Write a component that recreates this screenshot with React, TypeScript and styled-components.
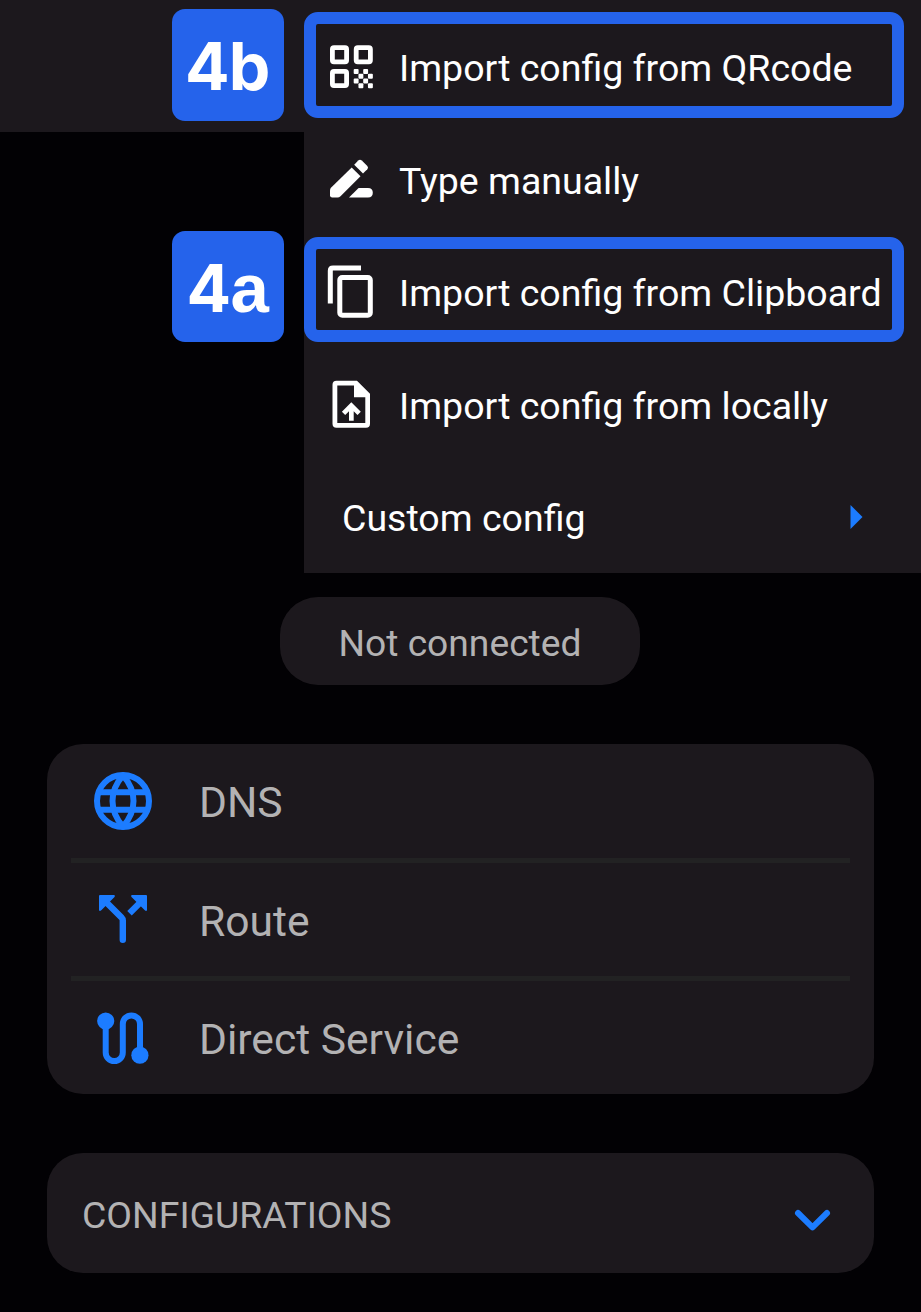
import React from "react";
import styled, { createGlobalStyle } from "styled-components";

const Global = createGlobalStyle`
  * { box-sizing: border-box; }
  html, body { margin: 0; background: #020104; }
  body { font-family: Roboto, "Liberation Sans", sans-serif; color: #fff; }
  svg { display: block; overflow: visible; }
`;

const Screen = styled.div`
  position: relative;
  width: 921px;
  height: 1312px;
  overflow: hidden;
  display: flex;
  flex-direction: column;
  align-items: center;
  background: #020104;
`;

const TopBar = styled.header`
  width: 100%;
  height: 132px;
  flex: none;
  background: #1c181d;
`;

const StatusPill = styled.div`
  flex: none;
  width: 360px;
  height: 88px;
  margin-top: 465px;
  margin-right: 1px;
  border-radius: 38px;
  background: #1c181d;
  color: #b3b2b3;
  display: flex;
  align-items: center;
  justify-content: center;
  padding-top: 4px;
  font-size: 37.2px;
  white-space: nowrap;
`;

const Card = styled.section<{ $top: number; $height: number }>`
  flex: none;
  width: 827px;
  height: ${(p) => p.$height}px;
  margin-top: ${(p) => p.$top}px;
  border-radius: 36px;
  background: #1c181d;
  color: #b3b2b3;
`;

const SettingRow = styled.div`
  display: flex;
  align-items: center;
  height: 113.5px;
  padding-left: 46px;
  font-size: 42.6px;
`;

const SettingIcon = styled.span`
  width: 60px;
  height: 60px;
  margin-right: 46px;
  flex: none;
`;

const SettingLabel = styled.span`
  padding-top: 3px;
  white-space: nowrap;
`;

const Divider = styled.div`
  height: 5px;
  margin: 0 24px 0 24px;
  background: #222223;
`;

const ConfigHeader = styled.div`
  height: 100%;
  display: flex;
  align-items: center;
  justify-content: space-between;
  padding: 3px 43px 0 35px;
  font-size: 37.4px;
`;

const ChevronIcon = styled.svg`
  margin-top: 11px;
`;

const Menu = styled.nav`
  position: absolute;
  top: 0;
  right: 0;
  width: 617px;
  height: 573px;
  padding-top: 10.5px;
  background: #1c181d;
`;

const MenuItem = styled.div<{ $sub?: boolean }>`
  display: flex;
  align-items: center;
  height: 112.5px;
  padding-left: ${(p) => (p.$sub ? 38 : 17)}px;
  padding-right: 58px;
  justify-content: ${(p) => (p.$sub ? "space-between" : "flex-start")};
  font-size: 37.5px;
  white-space: nowrap;
`;

const MenuIcon = styled.span`
  width: 60px;
  height: 60px;
  margin-right: 18px;
  flex: none;
`;

const MenuLabel = styled.span`
  padding-top: 2.5px;
`;

const Highlight = styled.div<{ $top: number }>`
  position: absolute;
  left: 304px;
  top: ${(p) => p.$top}px;
  width: 600px;
  height: 105.5px;
  border: 12px solid #2563eb;
  border-radius: 14px;
`;

const Badge = styled.div<{ $top: number }>`
  position: absolute;
  left: 171.5px;
  top: ${(p) => p.$top}px;
  width: 112.5px;
  height: 111.5px;
  border-radius: 13px;
  background: #2563eb;
  display: flex;
  align-items: baseline;
  justify-content: center;
  padding-right: 1px;
  font: 700 66px/115px Inter, sans-serif;
  letter-spacing: -0.8px;
`;

const TailedLetter = styled.span`
  font: 700 69px/100px "Liberation Sans", Arial, sans-serif;
`;

const QrIcon = () => (
  <svg width="60" height="60" viewBox="0 0 60 60" fill="#fff">
    <g fillRule="evenodd">
      <path d="M13 8.3H24Q28 8.3 28 12.3V23.3Q28 27.3 24 27.3H13Q9 27.3 9 23.3V12.3Q9 8.3 13 8.3ZM13.8 13.1V22.5H23.2V13.1Z" />
      <path d="M36.8 8.3H47.8Q51.8 8.3 51.8 12.3V23.3Q51.8 27.3 47.8 27.3H36.8Q32.8 27.3 32.8 23.3V12.3Q32.8 8.3 36.8 8.3ZM37.6 13.1V22.5H47V13.1Z" />
      <path d="M13 32H24Q28 32 28 36V47Q28 51 24 51H13Q9 51 9 47V36Q9 32 13 32ZM13.8 36.8V46.2H23.2V36.8Z" />
    </g>
    {[0, 1, 2, 3].flatMap((r) =>
      [0, 2].map((c) => (
        <rect
          key={`${r}-${c}`}
          x={32.7 + (c + (r % 2)) * 4.75}
          y={32 + r * 4.75}
          width="4.9"
          height="4.9"
          rx="1"
        />
      )),
    )}
  </svg>
);

const PencilIcon = () => (
  <svg width="60" height="60" viewBox="0 -1.2 60 60" fill="#fff">
    <path d="M30.7 17.2L39.5 26L19.5 46Q18.2 47.3 16.5 47.3H11.2Q9 47.3 9 45.1V40Q9 38.4 10.2 37.2Z" />
    <path d="M33.2 14.5L37.2 10.3Q39 8.7 40.8 10.3L46.3 15.8Q47.8 17.5 46.3 19.1L42 23.3Z" />
    <path d="M28 47.3L37.6 37.8H47Q51.8 38 51.8 42.5T47 47.3Z" />
  </svg>
);

const CopyIcon = () => (
  <svg width="60" height="60" viewBox="0 -1.2 60 60" fill="none" stroke="#fff" strokeWidth="5">
    <path d="M9.3 40.3V7.5Q9.3 4.8 12 4.8H40" />
    <rect x="18.8" y="14.4" width="30.5" height="37.6" rx="2.5" />
  </svg>
);

const FileUploadIcon = () => (
  <svg width="60" height="60" viewBox="0 0.3 60 60">
    <path
      fill="#fff"
      fillRule="evenodd"
      d="M15.5 7H36L49 20V50Q49 54 45 54H15.5Q11.5 54 11.5 50V11Q11.5 7 15.5 7ZM16.3 11.7V49.3H44.3V23.5H33V11.7Z"
    />
    <path fill="#fff" d="M30.3 28.5L39.8 38L36.5 41.3L32.7 37.5V47H28V37.5L24.2 41.3L20.9 38Z" />
  </svg>
);

const GlobeIcon = () => (
  <svg width="60" height="60" viewBox="0 0 60 60" fill="none" stroke="#1c7cff" strokeWidth="6">
    <circle cx="30" cy="30" r="26" />
    <path d="M5 21.2H55M5 38.8H55" />
    <path strokeLinejoin="round" d="M30 4.5C16 20 16 40 30 55.5C44 40 44 20 30 4.5Z" />
  </svg>
);

const SplitIcon = () => (
  <svg width="60" height="60" viewBox="0 0 60 60">
    <path
      fill="none"
      stroke="#1c7cff"
      strokeWidth="6.4"
      strokeLinecap="round"
      d="M12 12L28.5 28.5Q29.8 29.8 29.8 31.5V50.8"
    />
    <path stroke="#1c7cff" strokeWidth="6.4" d="M36.5 24.3L47 13.8" />
    <path
      fill="#1c7cff"
      d="M7 6H21Q22.8 6.5 21.5 8L8.3 21.3Q6.5 22.8 6 21V7Q6 6 7 6ZM53 6H39Q37.2 6.5 38.5 8L51.8 21.3Q53.5 22.8 54 21V7Q54 6 53 6Z"
    />
  </svg>
);

const CableIcon = () => (
  <svg width="60" height="60" viewBox="0 0 60 60">
    <path
      fill="none"
      stroke="#1c7cff"
      strokeWidth="6"
      d="M12.7 14V44.5A8.5 8.5 0 0 0 29.8 44.5V16A8.6 8.6 0 0 1 47 16V44"
    />
    <circle cx="12.7" cy="13" r="8.6" fill="#1c7cff" />
    <circle cx="46.9" cy="47.2" r="8.6" fill="#1c7cff" />
  </svg>
);

const settings = [
  { label: "DNS", Icon: GlobeIcon },
  { label: "Route", Icon: SplitIcon },
  { label: "Direct Service", Icon: CableIcon },
];

const imports = [
  { label: "Import config from QRcode", Icon: QrIcon },
  { label: "Type manually", Icon: PencilIcon },
  { label: "Import config from Clipboard", Icon: CopyIcon },
  { label: "Import config from locally", Icon: FileUploadIcon },
];

export default function App() {
  return (
    <Screen>
      <Global />
      <TopBar />
      <StatusPill>Not connected</StatusPill>
      <Card $top={59} $height={350}>
        {settings.map(({ label, Icon }, i) => (
          <React.Fragment key={label}>
            {i > 0 && <Divider />}
            <SettingRow>
              <SettingIcon><Icon /></SettingIcon>
              <SettingLabel>{label}</SettingLabel>
            </SettingRow>
          </React.Fragment>
        ))}
      </Card>
      <Card $top={59} $height={120}>
        <ConfigHeader>
          <span>CONFIGURATIONS</span>
          <ChevronIcon width="37" height="24" viewBox="0 0 37 24" fill="none">
            <path
              d="M4 5L18.5 19.3L33 5"
              stroke="#1c7cff"
              strokeWidth="6"
              strokeLinecap="round"
              strokeLinejoin="round"
            />
          </ChevronIcon>
        </ConfigHeader>
      </Card>
      <Menu>
        {imports.map(({ label, Icon }) => (
          <MenuItem key={label}>
            <MenuIcon><Icon /></MenuIcon>
            <MenuLabel>{label}</MenuLabel>
          </MenuItem>
        ))}
        <MenuItem $sub>
          <MenuLabel>Custom config</MenuLabel>
          <svg width="13" height="24" viewBox="0 0 13 24">
            <path d="M0.5 0L12.5 12L0.5 24Z" fill="#1c7cff" />
          </svg>
        </MenuItem>
      </Menu>
      <Highlight $top={12} />
      <Highlight $top={236.5} />
      <Badge $top={9}>4b</Badge>
      <Badge $top={230.5}>
        4<TailedLetter>a</TailedLetter>
      </Badge>
    </Screen>
  );
}
